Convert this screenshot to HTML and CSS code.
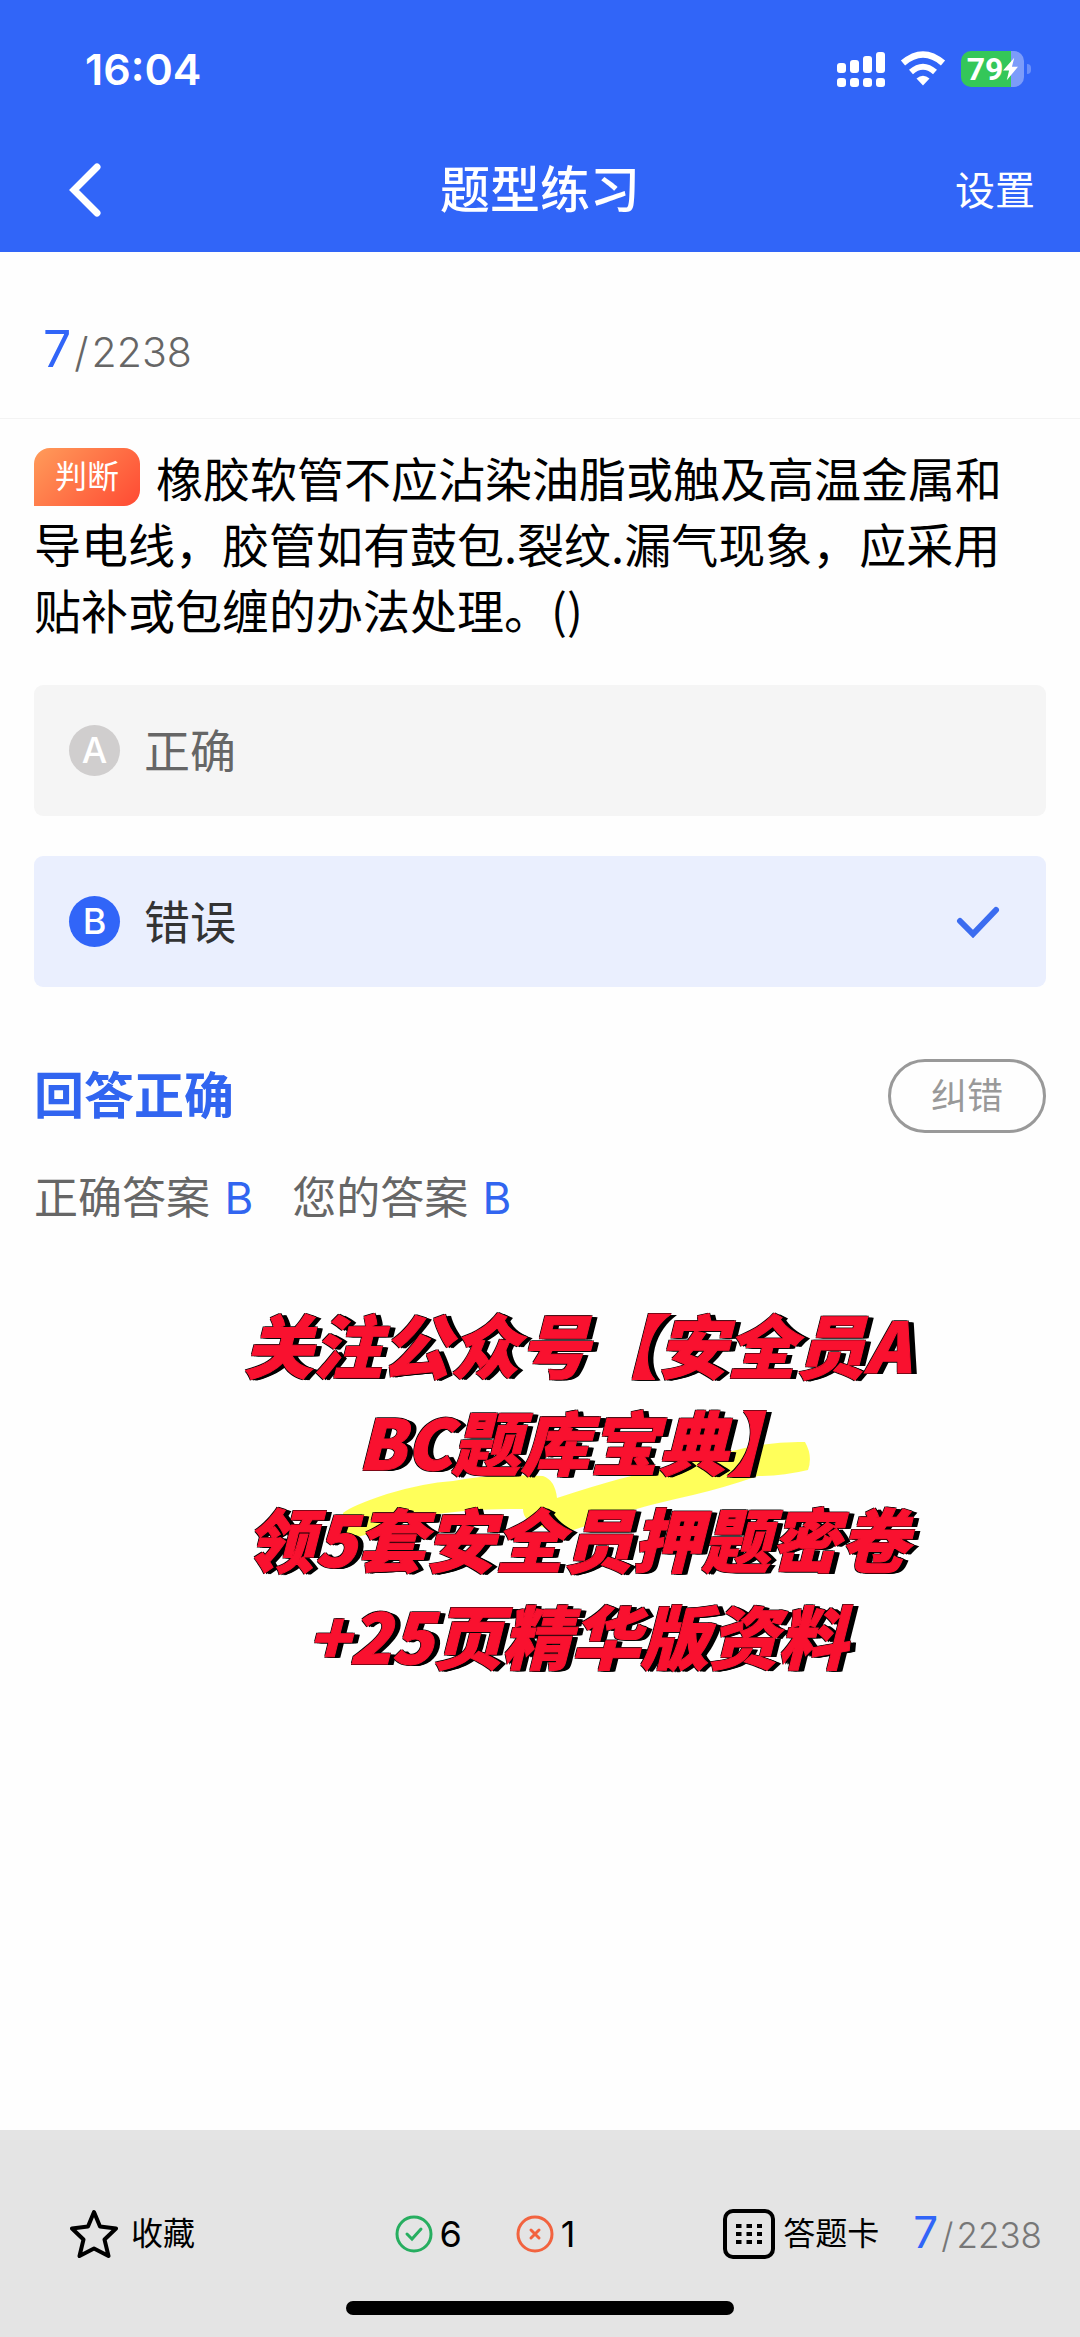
FILE: index.html
```html
<!DOCTYPE html>
<html lang="zh-CN">
<head>
<meta charset="utf-8">
<meta name="viewport" content="width=device-width, initial-scale=1">
<title>题型练习</title>
<link rel="stylesheet" href="styles.css">
</head>
<body>
<header class="header">
  <div class="status">
    <span class="clock">16:04</span>
    <div class="status-icons">
      <svg class="signal" viewBox="0 0 48 36" width="48" height="36" fill="#fff" aria-hidden="true">
        <rect x="0" y="12" width="9" height="10" rx="3"/><rect x="13" y="9" width="9" height="13" rx="3"/><rect x="26" y="5" width="9" height="17" rx="3"/><rect x="39" y="1" width="9" height="21" rx="3"/>
        <rect x="0" y="27" width="9" height="9" rx="3"/><rect x="13" y="27" width="9" height="9" rx="3"/><rect x="26" y="27" width="9" height="9" rx="3"/><rect x="39" y="27" width="9" height="9" rx="3"/>
      </svg>
      <svg class="wifi" viewBox="0 0 46 36" width="46" height="36" aria-hidden="true">
        <path d="M3 12Q23 -5 43 12" fill="none" stroke="#fff" stroke-width="6.500"/>
        <path d="M11 21Q23 10.500 35 21" fill="none" stroke="#fff" stroke-width="6"/>
        <path d="M16.500 27.500Q23 22 29.500 27.500L23 34.500Z" fill="#fff"/>
      </svg>
      <div class="battery">
        <span class="battery-level">79</span>
        <svg viewBox="0 0 16 24" width="15" height="24" aria-hidden="true"><path d="M12 0L0 13.500H6.500L4 24L16 9.500H9.500Z" fill="#fff"/></svg>
      </div>
    </div>
  </div>
  <nav class="nav">
    <button class="back" type="button" aria-label="返回">
      <svg viewBox="0 0 32 54" width="32" height="54" fill="none" stroke="#fff" stroke-width="7" stroke-linecap="round"><path d="M28 4L5 27L28 50"/></svg>
    </button>
    <h1 class="title">题型练习</h1>
    <button class="settings" type="button">设置</button>
  </nav>
</header>
<main class="main">
  <p class="progress"><span class="current">7</span><span class="slash">/</span>2238</p>
  <section class="quiz">
    <p class="question"><span class="tag">判断</span>橡胶软管不应沾染油脂或触及高温金属和导电线，胶管如有鼓包.裂纹.漏气现象，应采用贴补或包缠的办法处理。()</p>
    <div class="options">
      <button class="option" type="button"><span class="letter">A</span><span>正确</span></button>
      <button class="option chosen" type="button" aria-pressed="true"><span class="letter">B</span><span>错误</span>
        <svg class="tick" viewBox="0 0 44 32" width="44" height="32" fill="none" stroke="#3b6cf0" stroke-width="6" stroke-linecap="round"><path d="M4 15L17 28L40 4"/></svg>
      </button>
    </div>
    <div class="result">
      <h2 class="verdict">回答正确</h2>
      <button class="report" type="button">纠错</button>
    </div>
    <p class="answers"><span>正确答案 <b>B</b></span><span>您的答案 <b>B</b></span></p>
  </section>
  <section class="promo">
    <svg class="marker" viewBox="0 0 480 104" width="480" height="104" aria-hidden="true">
      <path fill="#ffff5a" d="M10 77Q18 70 54 58Q90 47 120 45Q160 37 210 40Q222 44 224 62Q300 37 330 34Q365 22 400 15Q435 5 472 6Q480 20 475 34Q450 40 425 40Q390 52 360 59Q320 68 300 74Q260 88 240 94Q222 96 206 90Q190 85 190 73Q140 72 90 80Q50 96 14 103Z"/>
    </svg>
    <p class="promo-text">关注公众号【安全员A<br>BC题库宝典】<br>领5套安全员押题密卷<br>+25页精华版资料</p>
  </section>
</main>
<footer class="footer">
  <div class="toolbar">
    <button class="tool star" type="button">
      <svg viewBox="0 0 48 50" width="48" height="50" fill="none" stroke="#000" stroke-width="4" stroke-linejoin="round"><path d="M24 3L30 17.500L46 19.500L34.500 30.500L38.500 47L24 39.500L9.500 47L13.500 30.500L2 19.500L18 17.500Z"/></svg>
      收藏
    </button>
    <div class="scores">
      <span class="score"><svg viewBox="0 0 38 38" width="38" height="38" fill="none" stroke="#27ae60" stroke-width="3" stroke-linecap="round"><circle cx="19" cy="19" r="17"/><path d="M12 19L17 24L26 14"/></svg>6</span>
      <span class="score"><svg viewBox="0 0 38 38" width="38" height="38" fill="none" stroke="#f2633f" stroke-width="3" stroke-linecap="round"><circle cx="19" cy="19" r="17"/><path d="M15 15L23 23M23 15L15 23"/></svg>1</span>
    </div>
    <div class="sheet">
      <button class="tool" type="button">
        <svg viewBox="0 0 52 50" width="52" height="50"><rect x="2" y="2" width="48" height="46" rx="8" fill="none" stroke="#000" stroke-width="4"/><path d="M13 17h26M13 25h26M13 33h26" stroke="#000" stroke-width="4" stroke-dasharray="5.500 5"/></svg>
        答题卡
      </button>
      <p class="mini"><span class="current">7</span><span class="slash">/</span>2238</p>
    </div>
  </div>
  <div class="home"></div>
</footer>
</body>
</html>
```
FILE: styles.css
```css
* { box-sizing: border-box; }
body {
  margin: 0;
  min-height: 100vh;
  display: flex;
  flex-direction: column;
  background: #fefefe;
  color: #000;
  font-family: Inter, "Noto Sans CJK SC", sans-serif;
}
h1, h2, p { margin: 0; }
svg { display: block; flex: none; }
button {
  margin: 0;
  padding: 0;
  border: 0;
  background: none;
  color: inherit;
  font: inherit;
  text-align: left;
}

.header { background: #3165f8; color: #fff; }
.status {
  display: flex;
  justify-content: space-between;
  align-items: center;
  height: 128px;
  padding: 10px 50px 0 85px;
}
.clock { font-size: 43px; font-weight: 600; line-height: 50px; }
.status-icons { display: flex; align-items: center; gap: 15px; }
.battery {
  position: relative;
  display: flex;
  align-items: center;
  justify-content: center;
  width: 63px;
  height: 36px;
  margin-right: 6px;
  border-radius: 10px;
  background: linear-gradient(90deg, #34c759 80%, #7c9cfa 80%);
}
.battery::after {
  content: "";
  position: absolute;
  right: -7px;
  top: 13px;
  width: 4px;
  height: 10px;
  border-radius: 0 4px 4px 0;
  background: #6a8ffa;
}
.battery-level { font-size: 32px; font-weight: 700; line-height: 36px; font-family: Roboto, sans-serif; }
.nav {
  display: grid;
  grid-template-columns: 1fr auto 1fr;
  align-items: center;
  height: 124px;
  padding: 0 45px 0 69px;
}
.title { margin-right: 24px; font-size: 50px; font-weight: 500; line-height: 72px; }
.settings { justify-self: end; padding-top: 2px; font-size: 40px; line-height: 60px; }
.back { justify-self: start; }

.main { flex: 1; }
.progress {
  padding: 65px 43px 34px;
  border-bottom: 1px solid #f3f3f3;
  font-size: 41px;
  font-weight: 300;
  line-height: 64px;
  color: #666;
}
.current { font-size: 50px; font-weight: 400; color: #3165f8; }
.slash { margin: 0 3px; }
.quiz { padding: 25px 34px 0; }
.question {
  padding-right: 8px;
  font-family: "Noto Sans CJK SC", sans-serif;
  font-size: 47px;
  line-height: 66px;
}
.tag {
  display: inline-block;
  width: 106px;
  margin: 4px 16px 0 0;
  border-radius: 16px 16px 16px 0;
  background: linear-gradient(135deg, #ff9c5a, #ff4a33);
  color: #fff;
  font-family: Inter, "Noto Sans CJK SC", sans-serif;
  font-size: 32px;
  line-height: 58px;
  text-align: center;
  vertical-align: top;
}
.options { display: grid; gap: 40px; padding-top: 43px; }
.option {
  display: flex;
  align-items: center;
  gap: 24px;
  height: 131px;
  padding: 0 46px 0 35px;
  border-radius: 9px;
  background: #f5f5f5;
  color: #666;
  font-size: 46px;
  line-height: 66px;
}
.letter {
  width: 51px;
  height: 51px;
  border-radius: 50%;
  background: #d0cece;
  color: #fff;
  font-size: 36px;
  font-weight: 500;
  line-height: 51px;
  text-align: center;
}
.chosen { background: #eaeffe; color: #333; }
.chosen .letter { background: #3165f8; }
.tick { margin-left: auto; }
.result {
  display: flex;
  justify-content: space-between;
  align-items: center;
  padding-top: 72px;
}
.verdict { color: #3165f0; font-size: 50px; font-weight: 700; line-height: 74px; }
.report {
  width: 158px;
  height: 74px;
  border: 3px solid #999;
  border-radius: 37px;
  color: #999;
  font-size: 36px;
  line-height: 66px;
  text-align: center;
}
.answers {
  display: flex;
  gap: 39px;
  padding-top: 33px;
  color: #666;
  font-size: 44px;
  line-height: 64px;
}
.answers b { margin-left: 2px; color: #3165f0; font-weight: 400; }

.promo { position: relative; padding: 65px 0 0 74px; }
.promo-text {
  position: relative;
  color: #f9112f;
  font-family: "Noto Sans CJK SC", sans-serif;
  font-size: 69px;
  font-style: italic;
  font-weight: 900;
  line-height: 97px;
  text-align: center;
  -webkit-text-stroke: 1px #f9112f;
  text-shadow: -1px -1px #000, -1px 1px #000, 1px -1px #000, 2px 1px #000, 4px 1px #000, 5px 1px #000, 6px 1px #000;
}
.marker { position: absolute; left: 333px; top: 206px; }

.footer { background: #e4e4e4; padding: 70px 0 22px; }
.toolbar {
  display: grid;
  grid-template-columns: 1fr auto 1fr;
  align-items: center;
  height: 64px;
  padding: 0 38px 0 70px;
  font-size: 32px;
  line-height: 48px;
}
.tool { display: flex; align-items: center; gap: 8px; }
.star { gap: 13px; }
.scores { display: flex; gap: 54px; margin-right: 142px; }
.score { display: flex; align-items: center; gap: 7px; font-size: 36px; }
.sheet { display: flex; align-items: center; justify-content: flex-end; gap: 34px; }
.mini { color: #777; font-size: 35px; font-weight: 300; line-height: 64px; }
.mini .current { font-size: 44px; }
.home {
  width: 36%;
  height: 14px;
  margin: 37px auto 0;
  border-radius: 7px;
  background: #000;
}
```
